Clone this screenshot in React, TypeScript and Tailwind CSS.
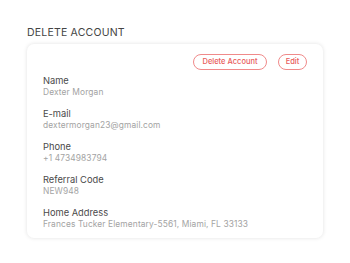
const fields = [
  { label: "Name", value: "Dexter Morgan" },
  { label: "E-mail", value: "dextermorgan23@gmail.com" },
  { label: "Phone", value: "+1 4734983794" },
  { label: "Referral Code", value: "NEW948" },
  { label: "Home Address", value: "Frances Tucker Elementary-5561, Miami, FL 33133" },
];

export default function App() {
  return (
    <div className="w-[350px] h-[263px] bg-white pt-[27px] px-[27px] font-['Inter',sans-serif]">
      <h2 className="text-[10.5px] leading-[12px] text-[#444] tracking-[0.2px]">DELETE ACCOUNT</h2>
      <div className="mt-[5px] w-[296px] rounded-[7px] bg-white shadow-[0_0_4px_rgba(0,0,0,0.12)] pt-[10px] pb-[8px] px-[16px]">
        <div className="flex justify-end gap-[11px] pr-0">
          <button className="h-[16px] w-[74px] rounded-full border border-[#f08a8a] text-[7.5px] font-medium text-[#e85c5c]">
            Delete Account
          </button>
          <button className="h-[16px] w-[29px] rounded-full border border-[#f08a8a] text-[7.5px] font-medium text-[#e85c5c]">
            Edit
          </button>
        </div>
        <div className="flex flex-col gap-[10px] mt-[5px]">
          {fields.map((f) => (
            <div key={f.label} className="flex flex-col">
              <span className="text-[9.3px] leading-[11px] text-[#4a4a4a]">{f.label}</span>
              <span className="mt-[1px] text-[8.4px] leading-[11px] tracking-[0.12px] text-[#a3a3a3]">{f.value}</span>
            </div>
          ))}
        </div>
      </div>
    </div>
  );
}
